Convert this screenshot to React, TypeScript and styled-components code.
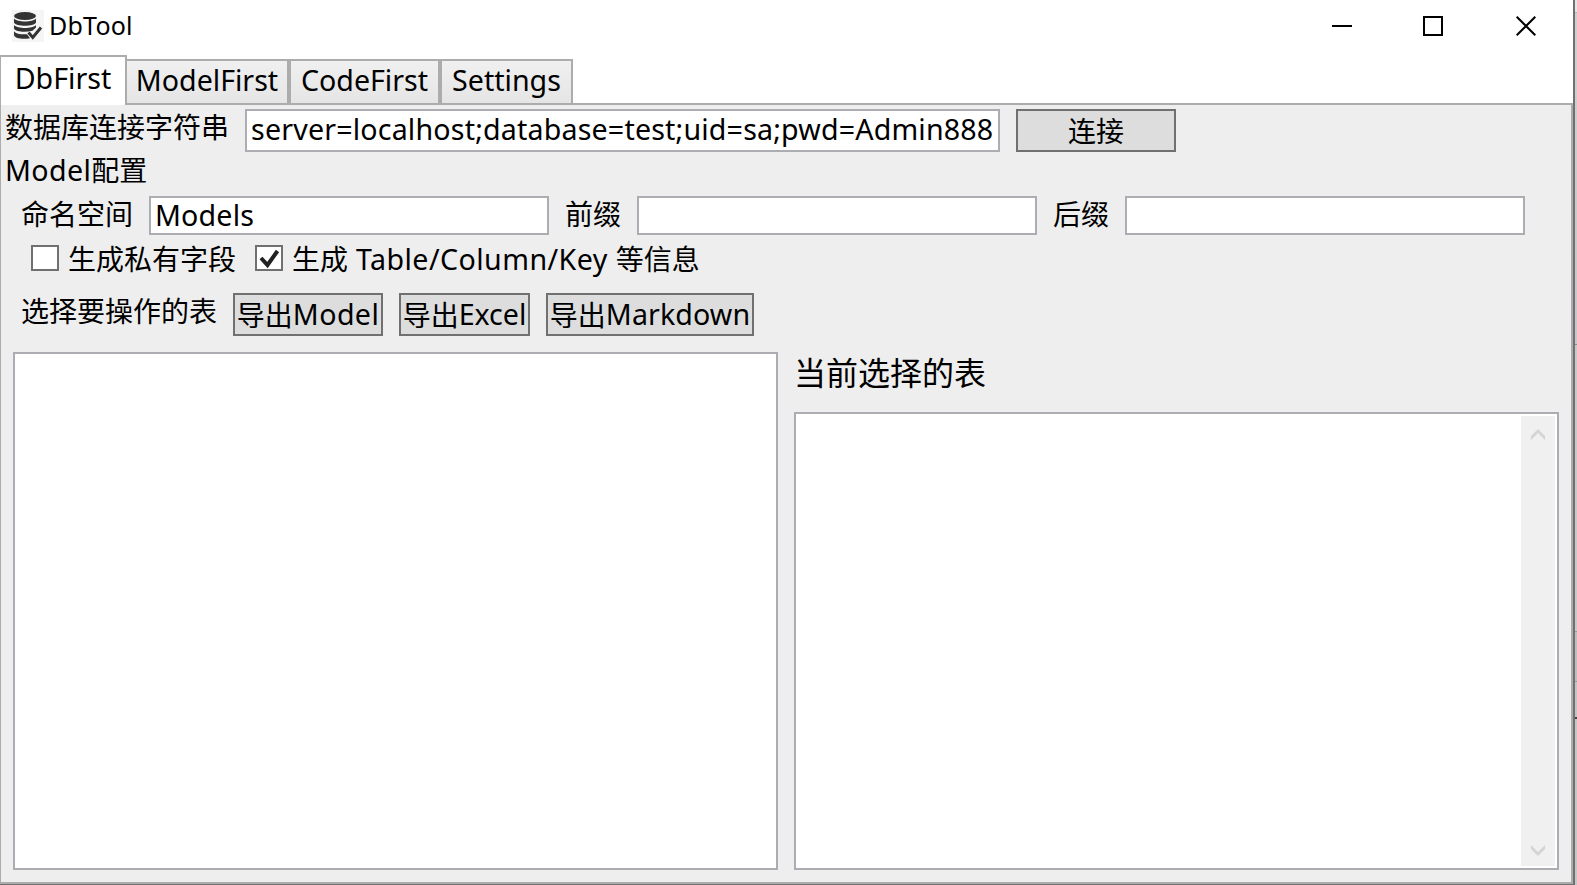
import React from 'react';
import styled, { createGlobalStyle } from 'styled-components';

const Global = createGlobalStyle`
  * { box-sizing: border-box; }
  body { margin: 0; background: #cacaca; overflow: hidden; }
  button, input { font: inherit; color: inherit; border-radius: 0; margin: 0; }
`;

const Desktop = styled.div`
  width: 1577px;
  height: 885px;
  overflow: hidden;
  background: linear-gradient(
    #e6e6e6 12px, #b4b4b4 12px 13px, #cfcfcf 13px 60px, #c8c6c8 344px, #8a8a8a 344px 345px,
    #c9c9c9 345px 631px, #9a9a9a 631px 632px, #bebebe 632px 681px, #9a9a9a 681px 682px,
    #c4c4c4 682px 717px, #444 717px 719px, #c6c6c6 719px
  );
`;

const Window = styled.div`
  display: flex;
  flex-direction: column;
  width: 1575px;
  height: 886px;
  border-right: 2px solid #707070;
  border-bottom: 2px solid #707070;
  background: #fff;
  color: #000;
  font-family: 'Noto Sans', 'Noto Sans CJK SC', sans-serif;
  font-size: 28px;
  line-height: 38px;
  white-space: nowrap;
`;

const TitleBar = styled.header`
  display: flex;
  align-items: center;
  height: 52px;
  padding: 0 37px 0 12px;
`;

const Title = styled.div`
  margin-left: 5px;
  font-size: 25px;
  line-height: 32px;
  padding-bottom: 3px;
  letter-spacing: 0.2px;
`;

const Controls = styled.div`
  display: flex;
  gap: 71px;
  margin-left: auto;

  svg:last-child { margin-left: 2px; }
`;

const Latin = styled.span<{ $track?: number }>`
  font-size: 28.6px;
  letter-spacing: ${p => p.$track ?? 0}px;
`;

const Han = styled.span`
  font-family: 'Noto Sans CJK SC', sans-serif;
`;

const Tabs = styled.nav`
  display: flex;
  align-items: flex-end;
  height: 53px;
  background: linear-gradient(#acacac, #acacac) left bottom / 100% 2px no-repeat;
`;

const Tab = styled.button<{ $active?: boolean; $w: number }>`
  display: flex;
  align-items: center;
  justify-content: center;
  width: ${p => p.$w}px;
  height: ${p => (p.$active ? 50 : 46)}px;
  padding: 0 0 ${p => (p.$active ? 7 : 4)}px;
  border: 2px solid #acacac;
  ${p => p.$active
    ? 'border-bottom: 0; border-left-width: 1px; background: #fff; margin-right: -2px; z-index: 1;'
    : 'background: linear-gradient(#f0f0f0, #e5e5e5);'}
`;

const Panel = styled.main`
  flex: 1;
  display: flex;
  flex-direction: column;
  border: solid #acacac;
  border-width: 0 2px 2px 1px;
  background: #eee;
  padding: 4px 12px 12px;
`;

const Row = styled.div<{ $h: number; $indent?: number; $gap?: number }>`
  display: flex;
  align-items: flex-start;
  flex: none;
  height: ${p => p.$h}px;
  gap: ${p => p.$gap ?? 16}px;
  margin-left: ${p => p.$indent ?? 8}px;
`;

const Label = styled.div<{ $w?: number }>`
  width: ${p => (p.$w ? `${p.$w}px` : 'auto')};
  line-height: 34px;
`;

const Field = styled.input<{ $w: number; $h: number; $lift?: number }>`
  && { font-size: 28.6px; }
  width: ${p => p.$w}px;
  height: ${p => p.$h}px;
  border: 2px solid #abadb3;
  background: #fff;
  padding: 0 0 ${p => p.$lift ?? 2}px 4px;
  outline: 0;
  letter-spacing: 0.18px;
`;

const Button = styled.button<{ $w: number }>`
  display: flex;
  align-items: center;
  justify-content: center;
  width: ${p => p.$w}px;
  height: 43px;
  padding: 0 0 2px;
  border: 2px solid #707070;
  background: #ddd;
`;

const CheckLabel = styled.label`
  display: flex;
  align-items: flex-start;
  gap: 9px;
  line-height: 33px;
`;

const Box = styled.span`
  display: flex;
  width: 28px;
  height: 26px;
  margin-top: 3px;
  border: 2px solid #707070;
  background: #fff;
`;

const Split = styled.div`
  flex: 1;
  display: flex;
  gap: 16px;
`;

const TableList = styled.section`
  width: 765px;
  border: 2px solid #abadb3;
  background: #fff;
`;

const Selected = styled.section`
  display: flex;
  flex-direction: column;
  width: 765px;
`;

const SelectedTitle = styled.h2`
  height: 60px;
  margin: 0;
  font-size: 32px;
  line-height: 39px;
  font-weight: 400;
`;

const SelectedList = styled.div`
  flex: 1;
  display: flex;
  justify-content: flex-end;
  padding: 2px;
  border: 2px solid #abadb3;
  background: #fff;
`;

const ScrollBar = styled.div`
  display: flex;
  flex-direction: column;
  justify-content: space-between;
  align-items: center;
  width: 34px;
  padding: 13px 0 10px;
  background: #f0f0f0;
`;

const ExportButton = ({ width, format, track }: { width: number; format: string; track?: number }) => (
  <Button $w={width}><Han>导出</Han><Latin $track={track}>{format}</Latin></Button>
);

const Logo = () => (
  <svg width="32" height="32" viewBox="0 0 32 32">
    <rect width="32" height="32" fill="#f5f5f5" />
    <g fill="#333">
      <ellipse cx="13" cy="6" rx="11" ry="4" />
      <path d="M2 8.500c3 4 19 4 22 0v4c-2 4.300-20 4.300-22 0z" />
      <path d="M2 15c3 4 19 4 22 0v2.500l-3.500 3.300c-7 1.700-17 1.200-18.500-2.300z" />
      <path d="M2 21.200c2 2.600 8 3.600 13 3l3 4c-7 1.300-15 .4-16-3z" />
    </g>
    <path d="M16.500 22.500l4.300 5 8.200-10" fill="none" stroke="#333" strokeWidth="3" />
  </svg>
);

const Chevron = ({ down }: { down?: boolean }) => (
  <svg width="14" height="11" viewBox="0 0 14 11">
    <path d={down ? 'M0 0l7 7 7-7v4l-7 7-7-7z' : 'M0 11l7-7 7 7V7L7 0 0 7z'} fill="#d4d4d4" />
  </svg>
);

export default function App() {
  return (
    <Desktop>
      <Global />
      <Window>
        <TitleBar>
          <Logo />
          <Title>DbTool</Title>
          <Controls>
            <svg width="20" height="20"><path d="M0 10h20" stroke="#000" strokeWidth="2" /></svg>
            <svg width="20" height="20"><rect x="1" y="1" width="18" height="18" fill="none" stroke="#000" strokeWidth="2" /></svg>
            <svg width="20" height="20"><path d="M.7.7l18.600 18.600M19.300.7L.7 19.300" stroke="#000" strokeWidth="2" /></svg>
          </Controls>
        </TitleBar>
        <Tabs>
          <Tab $active $w={127}><Latin>DbFirst</Latin></Tab>
          <Tab $w={164}><Latin>ModelFirst</Latin></Tab>
          <Tab $w={151}><Latin>CodeFirst</Latin></Tab>
          <Tab $w={133}><Latin>Settings</Latin></Tab>
        </Tabs>
        <Panel>
          <Row $h={43} $indent={-8}>
            <Label $w={224}><Han>数据库连接字符串</Han></Label>
            <Field $w={755} $h={43} $lift={5} defaultValue="server=localhost;database=test;uid=sa;pwd=Admin888" />
            <Button $w={160}><Han>连接</Han></Button>
          </Row>
          <Row $h={44} $indent={-8}>
            <Label><Latin $track={0.4}>Model</Latin><Han>配置</Han></Label>
          </Row>
          <Row $h={46}>
            <Label $w={112}><Han>命名空间</Han></Label>
            <Field $w={400} $h={39} defaultValue="Models" />
            <Label $w={56}><Han>前缀</Han></Label>
            <Field $w={400} $h={39} />
            <Label $w={56}><Han>后缀</Han></Label>
            <Field $w={400} $h={39} />
          </Row>
          <Row $h={51} $indent={18} $gap={19}>
            <CheckLabel><Box /><Han>生成私有字段</Han></CheckLabel>
            <CheckLabel>
              <Box><svg width="24" height="22"><path d="M4 11l6.500 7L20.500 4" fill="none" stroke="#212121" strokeWidth="4" /></svg></Box>
              <span><Han>生成</Han><Latin $track={0.45}> Table/Column/Key </Latin><Han>等信息</Han></span>
            </CheckLabel>
          </Row>
          <Row $h={59}>
            <Label $w={196}><Han>选择要操作的表</Han></Label>
            <ExportButton width={150} format="Model" track={0.4} />
            <ExportButton width={131} format="Excel" />
            <ExportButton width={208} format="Markdown" track={0.1} />
          </Row>
          <Split>
            <TableList />
            <Selected>
              <SelectedTitle><Han>当前选择的表</Han></SelectedTitle>
              <SelectedList>
                <ScrollBar><Chevron /><Chevron down /></ScrollBar>
              </SelectedList>
            </Selected>
          </Split>
        </Panel>
      </Window>
    </Desktop>
  );
}
